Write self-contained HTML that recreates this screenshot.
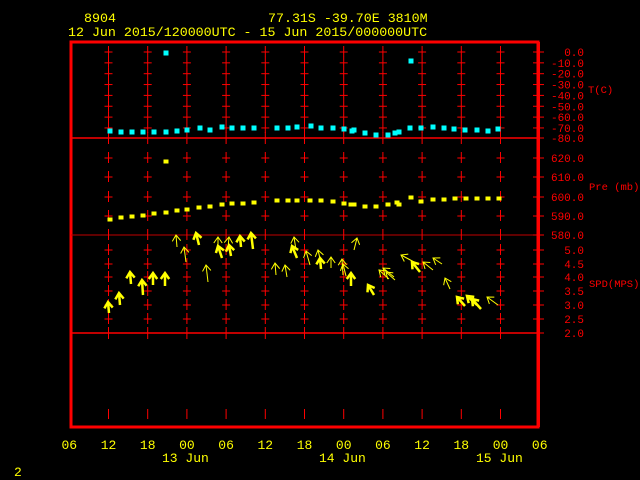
<!DOCTYPE html>
<html><head><meta charset="utf-8"><style>
html,body{margin:0;padding:0;background:#000;width:640px;height:480px;overflow:hidden}
svg{display:block}
text{font-family:"Liberation Mono","DejaVu Sans Mono",monospace}
</style></head><body>
<svg id="s" width="640" height="480" viewBox="0 0 640 480" xmlns="http://www.w3.org/2000/svg">
<g fill="#ffff00" font-size="13.3">
<text x="84" y="22">8904</text>
<text x="268" y="22">77.31S  -39.70E  3810M</text>
<text x="68" y="36">12 Jun 2015/120000UTC - 15 Jun 2015/000000UTC</text>
</g>
<rect x="71" y="42" width="467" height="385" fill="none" stroke="#ff0000" stroke-width="3"/>
<line x1="71" y1="138" x2="538" y2="138" stroke="#ff0000" stroke-width="1.5"/>
<line x1="71" y1="235" x2="538" y2="235" stroke="#c00000" stroke-width="1"/>
<line x1="71" y1="333" x2="538" y2="333" stroke="#ff0000" stroke-width="1.5"/>
<line x1="538.5" y1="42" x2="538.5" y2="427" stroke="#ff0000" stroke-width="3"/>
<g id="grid" stroke="#ff0000" stroke-width="1"></g>
<g fill="#ff0000" font-size="11" text-anchor="end" id="lab"></g>
<g fill="#ff0000" font-size="10.5">
<text x="588" y="93">T(C)</text>
<text x="589" y="190">Pre (mb)</text>
<text x="589" y="287">SPD(MPS)</text>
</g>
<g id="data"></g>
<g fill="#ffff00" font-size="13" text-anchor="middle" id="xl"></g>
<g fill="#ffff00" font-size="13">
<text x="162" y="462">13 Jun</text>
<text x="319" y="462">14 Jun</text>
<text x="476" y="462">15 Jun</text>
<text x="14" y="476">2</text>
</g>
</svg>
<script>
var NS="http://www.w3.org/2000/svg";
function el(p,t,a){var e=document.createElementNS(NS,t);for(var k in a)e.setAttribute(k,a[k]);p.appendChild(e);return e;}
var g=document.getElementById('grid'),lab=document.getElementById('lab'),d=document.getElementById('data'),xl=document.getElementById('xl');
var cols=[];for(var k=0;k<11;k++)cols.push(108.5+39.2*k);
var ys=[],labs=[];
for(var i=0;i<8;i++){ys.push(52+i*10.85);labs.push(i==0?"0.0":"-"+(i*10)+".0");}
var pre=[[158,"620.0"],[177,"610.0"],[197,"600.0"],[216,"590.0"]];
var spd=[[250,"5.0"],[264,"4.5"],[277,"4.0"],[291,"3.5"],[305,"3.0"],[319,"2.5"]];
var cy=ys.concat(pre.map(a=>a[0])).concat(spd.map(a=>a[0]));
cols.forEach(function(x){cy.forEach(function(y){
 el(g,'line',{x1:x,y1:y-6,x2:x,y2:y+5});el(g,'line',{x1:x-4,y1:y,x2:x+4,y2:y});});
 el(g,'line',{x1:x,y1:132,x2:x,y2:144});el(g,'line',{x1:x,y1:229,x2:x,y2:240});el(g,'line',{x1:x,y1:327,x2:x,y2:339});
 el(g,'line',{x1:x,y1:409,x2:x,y2:419});});
var all=ys.map((y,i)=>[y,labs[i]]).concat([[138,"-80.0"]]).concat(pre).concat([[235,"580.0"]]).concat(spd).concat([[333,"2.0"]]);
all.forEach(function(a){el(g,'line',{x1:533,y1:a[0],x2:544,y2:a[0]});var t=el(lab,'text',{x:584,y:a[0]+4});t.textContent=a[1];});
var xs=["06","12","18","00","06","12","18","00","06","12","18","00","06"];
xs.forEach(function(s,i){var t=el(xl,'text',{x:69.3+39.2*i,y:449});t.textContent=s;});
var T=[[110,131],[121,132],[132,132],[143,132],[154,132],[166,132],[177,131],[187,130],[200,128],[210,130],[222,127],[232,128],[243,128],[254,128],[277,128],[288,128],[297,127],[311,126],[321,128],[333,128],[344,129],[352,131],[354,130],[365,133],[376,135],[388,135],[395,133],[399,132],[410,128],[421,128],[433,127],[444,128],[454,129],[465,130],[477,130],[488,131],[498,129],[166,53],[411,61]];
T.forEach(function(p){el(d,'rect',{x:p[0]-2.5,y:p[1]-2.5,width:5,height:5,fill:"#00ffff"});});
var P=[[110,220],[121,218],[132,217],[143,216],[154,214],[166,213],[177,211],[187,210],[199,208],[210,207],[222,205],[232,204],[243,204],[254,203],[277,201],[288,201],[297,201],[310,201],[321,201],[333,202],[344,204],[351,205],[354,205],[365,207],[376,207],[388,205],[397,203],[399,205],[411,198],[421,202],[433,200],[444,200],[455,199],[466,199],[477,199],[488,199],[499,199],[166,162]];
P.forEach(function(p){el(d,'rect',{x:p[0]-2.5,y:p[1]-2.5,width:5,height:4,fill:"#ffff00"});});
var A=[[108,302,109,313,1],[119,293,120,305,1],[130,272,131,284,1],[142,280,143,295,1],[153,273,153,285,1],[165,273,165,286,1],[176,235,177,247,0],[184,247,186,262,0],[196,233,199,245,1],[206,265,208,282,0],[218,237,218,250,0],[218,246,222,258,1],[229,237,228,248,0],[229,245,231,256,1],[240,236,241,247,1],[251,233,253,249,1],[275,263,276,275,0],[285,265,287,277,0],[294,237,296,250,0],[292,246,297,258,1],[306,251,310,265,0],[318,250,321,263,0],[320,258,321,269,1],[331,257,331,268,0],[343,264,346,276,0],[351,273,351,286,1],[357,238,354,250,0],[342,259,343,275,0],[368,285,374,295,1],[379,270,389,279,0],[383,268,394,277,0],[386,272,395,280,0],[401,255,416,263,0],[412,262,420,272,1],[423,262,433,270,0],[433,258,442,264,0],[445,278,450,289,0],[457,297,465,306,1],[467,296,477,305,1],[472,299,481,309,1],[487,297,498,305,0]];
A.forEach(function(a){var w=a[4]?2.5:1;var dx=a[2]-a[0],dy=a[3]-a[1],L=Math.hypot(dx,dy),ux=dx/L,uy=dy/L,h=6;
 var px=-uy,py=ux;var st={stroke:"#ffff00","stroke-width":w,fill:"none"};
 el(d,'line',Object.assign({x1:a[0],y1:a[1],x2:a[2],y2:a[3]},st));
 el(d,'polyline',Object.assign({points:(a[0]+ux*h+px*h*0.7)+","+(a[1]+uy*h+py*h*0.7)+" "+a[0]+","+a[1]+" "+(a[0]+ux*h-px*h*0.7)+","+(a[1]+uy*h-py*h*0.7)},st));});
</script>
</body></html>
